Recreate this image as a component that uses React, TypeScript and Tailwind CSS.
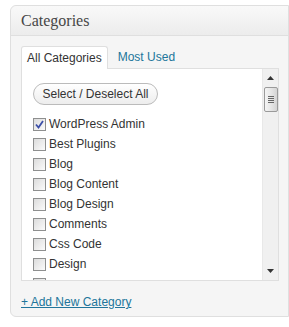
import React from "react";

const items = [
  "WordPress Admin",
  "Best Plugins",
  "Blog",
  "Blog Content",
  "Blog Design",
  "Comments",
  "Css Code",
  "Design",
];

function Checkbox({ checked }: { checked?: boolean }) {
  return (
    <span className="relative flex h-[13px] w-[13px] shrink-0 items-center justify-center border border-[#8e8f8f] bg-gradient-to-br from-[#dcdcdc] to-[#fbfbfb]">
      {checked && (
        <svg width="9" height="9" viewBox="0 0 9 9" className="absolute">
          <path d="M1 4.5 L3.5 7.5 L8 1" fill="none" stroke="#3c4fa8" strokeWidth="1.8" />
        </svg>
      )}
    </span>
  );
}

export default function App() {
  return (
    <div className="h-[327px] w-[289px] overflow-hidden bg-white pl-[10px] pt-[5px] font-['Liberation_Sans',Arial,sans-serif] text-[12px] text-[#333]">
      <div className="h-[312px] rounded-l-[6px] border border-[#dfdfdf] bg-[#f5f5f5]">
        {/* Header */}
        <div className="flex h-[30px] items-center rounded-tl-[6px] border-b border-[#dfdfdf] bg-gradient-to-b from-[#f9f9f9] to-[#ececec] px-[10px]">
          <span className="font-['Liberation_Serif',Georgia,serif] text-[16px] text-[#464646]">Categories</span>
        </div>

        <div className="px-[10px] pt-[9px]">
          {/* Tabs */}
          <div className="flex h-[23px] items-end gap-[10px]">
            <div className="relative -mb-px flex h-[23px] items-center rounded-t-[3px] border border-b-0 border-[#dfdfdf] bg-white px-[5px]">
              All Categories
            </div>
            <div className="flex h-[22px] items-center text-[#21759b]">Most Used</div>
          </div>

          {/* List box */}
          <div className="flex h-[213px] w-[258px] border border-[#dfdfdf] bg-white">
            <div className="flex-1 overflow-hidden pl-[11px] pt-[14px]">
              <button className="h-[22px] w-[125px] rounded-full border border-[#bbb] bg-gradient-to-b from-white to-[#ededed] text-[12px] text-[#333]">
                Select / Deselect All
              </button>
              <ul className="mt-[9px]">
                {items.map((label, i) => (
                  <li key={label} className="flex h-[20px] items-center gap-[3px]">
                    <Checkbox checked={i === 0} />
                    <span>{label}</span>
                  </li>
                ))}
                {/* next row, only the box edge peeks out */}
                <li className="flex h-[20px] items-center">
                  <Checkbox />
                </li>
              </ul>
            </div>

            {/* Scrollbar */}
            <div className="flex w-[16px] flex-col items-center border-l border-[#e8e8e8] bg-[#f0f0f0]">
              <div className="flex h-[18px] items-center justify-center">
                <svg width="7" height="4" viewBox="0 0 7 4">
                  <path d="M3.5 0 L7 4 L0 4 Z" fill="#333" />
                </svg>
              </div>
              <div className="flex h-[25px] w-[14px] flex-col items-center justify-center gap-[1px] rounded-[2px] border border-[#9a9a9a] bg-gradient-to-r from-[#f4f4f4] via-[#e6e6e6] to-[#d4d4d4]">
                <span className="h-px w-[6px] bg-[#666]" />
                <span className="h-px w-[6px] bg-[#666]" />
                <span className="h-px w-[6px] bg-[#666]" />
                <span className="h-px w-[6px] bg-[#666]" />
              </div>
              <div className="flex-1" />
              <div className="flex h-[18px] items-center justify-center">
                <svg width="7" height="4" viewBox="0 0 7 4">
                  <path d="M0 0 L7 0 L3.5 4 Z" fill="#333" />
                </svg>
              </div>
            </div>
          </div>

          {/* Footer link */}
          <div className="pt-[12px]">
            <a href="#" className="text-[#21759b] underline">+ Add New Category</a>
          </div>
        </div>
      </div>
    </div>
  );
}
